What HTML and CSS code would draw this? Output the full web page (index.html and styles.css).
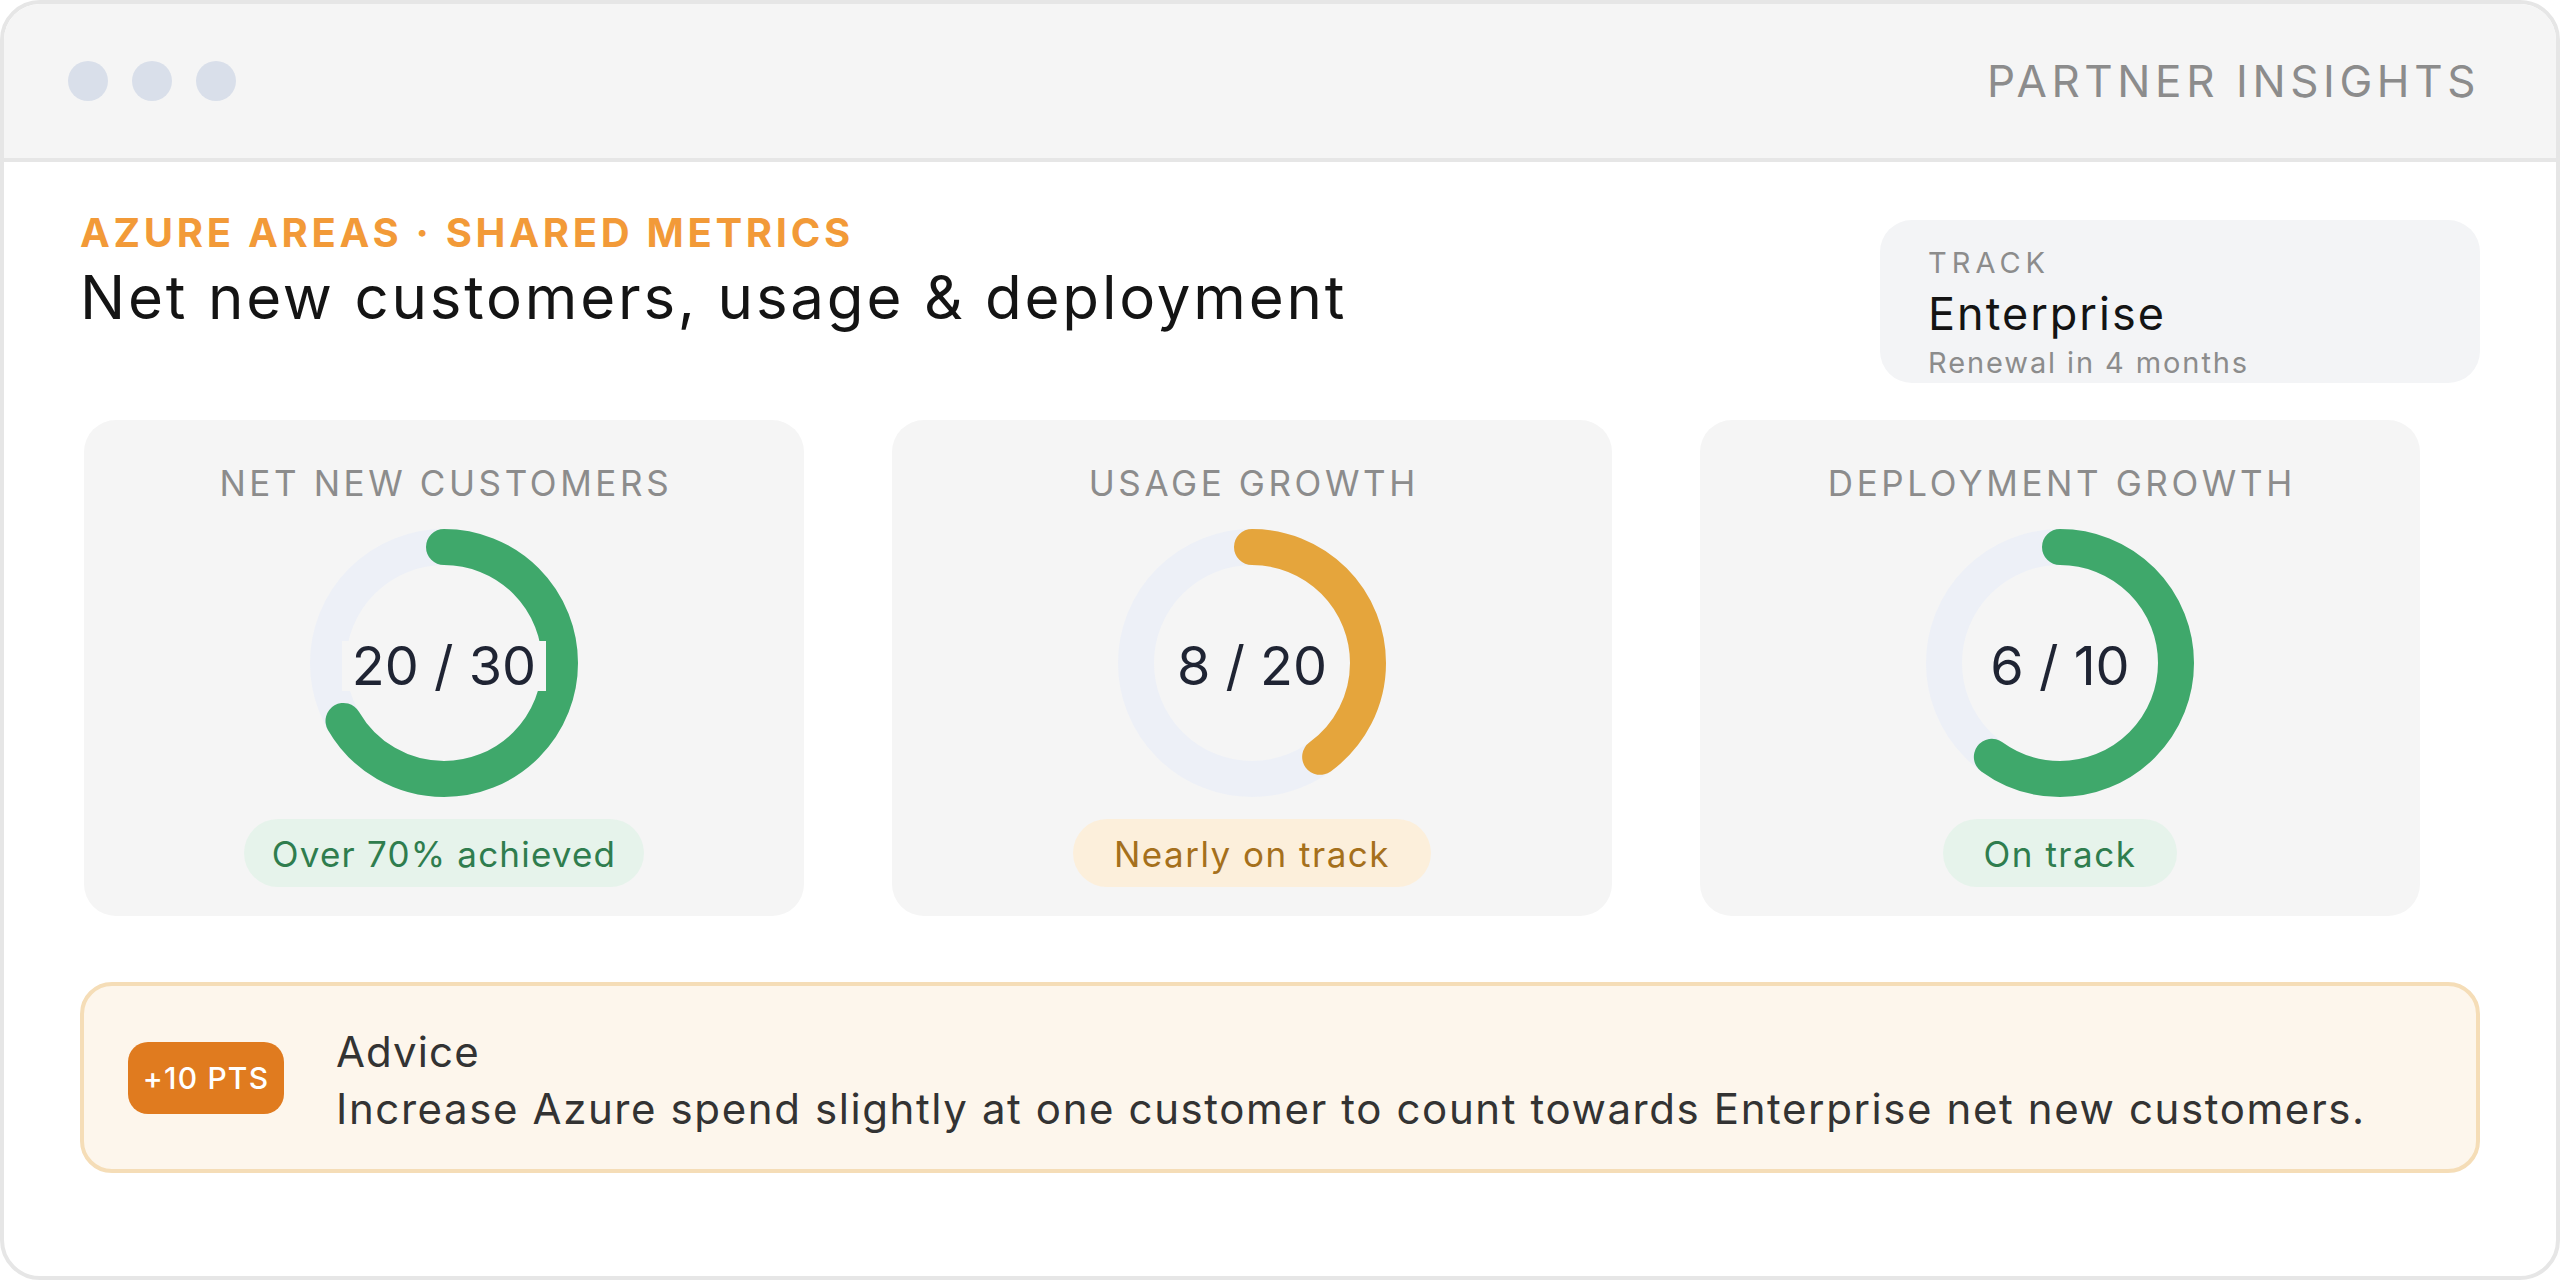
FILE: index.html
```html
<!DOCTYPE html>
<html lang="en">
<head>
<meta charset="utf-8">
<title>Partner Insights</title>
<link rel="stylesheet" href="styles.css">
</head>
<body>
<div class="window">
  <header class="topbar">
    <div class="dots"><span class="dot"></span><span class="dot"></span><span class="dot"></span></div>
    <div class="app-name">PARTNER INSIGHTS</div>
  </header>
  <main class="content">
    <section class="head-row">
      <div class="head-text">
        <div class="eyebrow">AZURE AREAS · SHARED METRICS</div>
        <h1 class="title">Net new customers, usage &amp; deployment</h1>
      </div>
      <div class="track-card">
        <div class="track-label">TRACK</div>
        <div class="track-name">Enterprise</div>
        <div class="track-sub">Renewal in 4 months</div>
      </div>
    </section>

    <section class="metrics">
      <div class="metric">
        <div class="metric-label">NET NEW CUSTOMERS</div>
        <div class="donut">
          <svg viewBox="0 0 268 268" width="268" height="268">
            <circle class="ring-track" cx="134" cy="134" r="116"/>
            <circle class="ring-bar green" cx="134" cy="134" r="116" pathLength="100" stroke-dasharray="66.67 100" transform="rotate(-90 134 134)"/>
          </svg>
          <span class="value value-boxed">20 / 30</span>
        </div>
        <div class="pill pill-green pill-tight">Over 70% achieved</div>
      </div>
      <div class="metric">
        <div class="metric-label">USAGE GROWTH</div>
        <div class="donut">
          <svg viewBox="0 0 268 268" width="268" height="268">
            <circle class="ring-track" cx="134" cy="134" r="116"/>
            <circle class="ring-bar orange" cx="134" cy="134" r="116" pathLength="100" stroke-dasharray="40 100" transform="rotate(-90 134 134)"/>
          </svg>
          <span class="value">8 / 20</span>
        </div>
        <div class="pill pill-orange">Nearly on track</div>
      </div>
      <div class="metric">
        <div class="metric-label">DEPLOYMENT GROWTH</div>
        <div class="donut">
          <svg viewBox="0 0 268 268" width="268" height="268">
            <circle class="ring-track" cx="134" cy="134" r="116"/>
            <circle class="ring-bar green" cx="134" cy="134" r="116" pathLength="100" stroke-dasharray="60 100" transform="rotate(-90 134 134)"/>
          </svg>
          <span class="value">6 / 10</span>
        </div>
        <div class="pill pill-green">On track</div>
      </div>
    </section>

    <section class="advice">
      <div class="badge">+10 PTS</div>
      <div class="advice-text">
        <div class="advice-title">Advice</div>
        <div class="advice-body">Increase Azure spend slightly at one customer to count towards Enterprise net new customers.</div>
      </div>
    </section>
  </main>
</div>
</body>
</html>
```

FILE: styles.css
```css
* { box-sizing: border-box; }
html, body { margin: 0; padding: 0; background: #ffffff; }
body {
  font-family: "Inter", "Noto Sans", sans-serif;
  width: 2560px;
  height: 1280px;
  overflow: hidden;
}
.window {
  width: 2560px;
  height: 1280px;
  border: 4px solid #e6e6e6;
  border-radius: 40px;
  overflow: hidden;
  background: #ffffff;
}
.topbar {
  height: 158px;
  background: #f5f5f5;
  border-bottom: 4px solid #e6e6e6;
  display: flex;
  align-items: center;
  justify-content: space-between;
  padding: 0 76px 0 64px;
}
.dots { display: flex; gap: 24px; }
.dot {
  width: 40px;
  height: 40px;
  border-radius: 50%;
  background: #d9dfea;
}
.app-name {
  font-size: 44px;
  line-height: 1.2;
  letter-spacing: 4.6px;
  color: #8c8c8c;
}
.content {
  padding: 47px 76px 0 76px;
}
.head-row {
  display: flex;
  justify-content: space-between;
  align-items: flex-start;
}
.eyebrow {
  font-size: 40px;
  line-height: 1.2;
  font-weight: 700;
  letter-spacing: 3.7px;
  color: #f29a38;
}
.title {
  margin: 4px 0 0 0;
  font-size: 60px;
  line-height: 1.2;
  font-weight: 400;
  letter-spacing: 2.8px;
  color: #141414;
}
.track-card {
  margin-top: 11px;
  width: 600px;
  height: 163px;
  background: #f3f4f6;
  border-radius: 32px;
  padding: 26px 48px 0 48px;
}
.track-label {
  font-size: 29px;
  line-height: 1.2;
  letter-spacing: 5px;
  color: #8c8c8c;
}
.track-name {
  margin-top: 6px;
  font-size: 45px;
  line-height: 1.2;
  letter-spacing: 2px;
  color: #141414;
}
.track-sub {
  margin-top: 5px;
  font-size: 29px;
  line-height: 1.2;
  letter-spacing: 1.9px;
  color: #8c8c8c;
}
.metrics {
  margin-top: 37px;
  padding-left: 4px;
  display: grid;
  grid-template-columns: repeat(3, 720px);
  gap: 88px;
}
.metric {
  height: 496px;
  background: #f5f5f5;
  border-radius: 32px;
  padding: 42px 0 0 0;
  display: flex;
  flex-direction: column;
  align-items: center;
}
.metric-label {
  font-size: 35px;
  line-height: 1.2;
  letter-spacing: 3.6px;
  margin-right: -3.6px;
  color: #8c8c8c;
}
.donut {
  margin-top: 25px;
  width: 268px;
  height: 268px;
  position: relative;
  display: flex;
  align-items: center;
  justify-content: center;
}
.donut svg {
  position: absolute;
  left: 0;
  top: 0;
}
.ring-track {
  fill: none;
  stroke: #edf0f7;
  stroke-width: 36;
}
.ring-bar {
  fill: none;
  stroke-width: 36;
  stroke-linecap: round;
}
.ring-bar.green { stroke: #3fa86b; }
.ring-bar.orange { stroke: #e5a53c; }
.value {
  position: relative;
  font-size: 54px;
  line-height: 50px;
  color: #1f2433;
  padding: 0 10px;
  margin-top: 6px;
}
.value-boxed { background: #f5f5f5; }
.pill {
  margin-top: 22px;
  height: 68px;
  padding: 3px 41px 0 41px;
  border-radius: 34px;
  display: flex;
  align-items: center;
  font-size: 35px;
  line-height: 1;
  letter-spacing: 1.5px;
}
.pill-tight {
  padding-left: 28px;
  padding-right: 28px;
  letter-spacing: 1.2px;
}
.pill-green { background: #e6f3eb; color: #2f7d4e; }
.pill-orange { background: #fcefdb; color: #a5701c; }
.advice {
  margin-top: 66px;
  height: 191px;
  background: #fdf6ec;
  border: 4px solid #f5ddb7;
  border-radius: 32px;
  padding: 0 44px;
  display: flex;
  align-items: center;
  gap: 52px;
}
.badge {
  width: 156px;
  height: 72px;
  flex: none;
  border-radius: 20px;
  background: #e07b1f;
  color: #ffffff;
  font-size: 30px;
  font-weight: 500;
  letter-spacing: 1.2px;
  display: flex;
  align-items: center;
  justify-content: center;
}
.advice-text {
  padding-top: 6px;
}
.advice-title {
  font-size: 42px;
  line-height: 1.2;
  letter-spacing: 1.1px;
  color: #333333;
}
.advice-body {
  margin-top: 6px;
  font-size: 42px;
  line-height: 1.2;
  letter-spacing: 1.6px;
  color: #333333;
}
```
